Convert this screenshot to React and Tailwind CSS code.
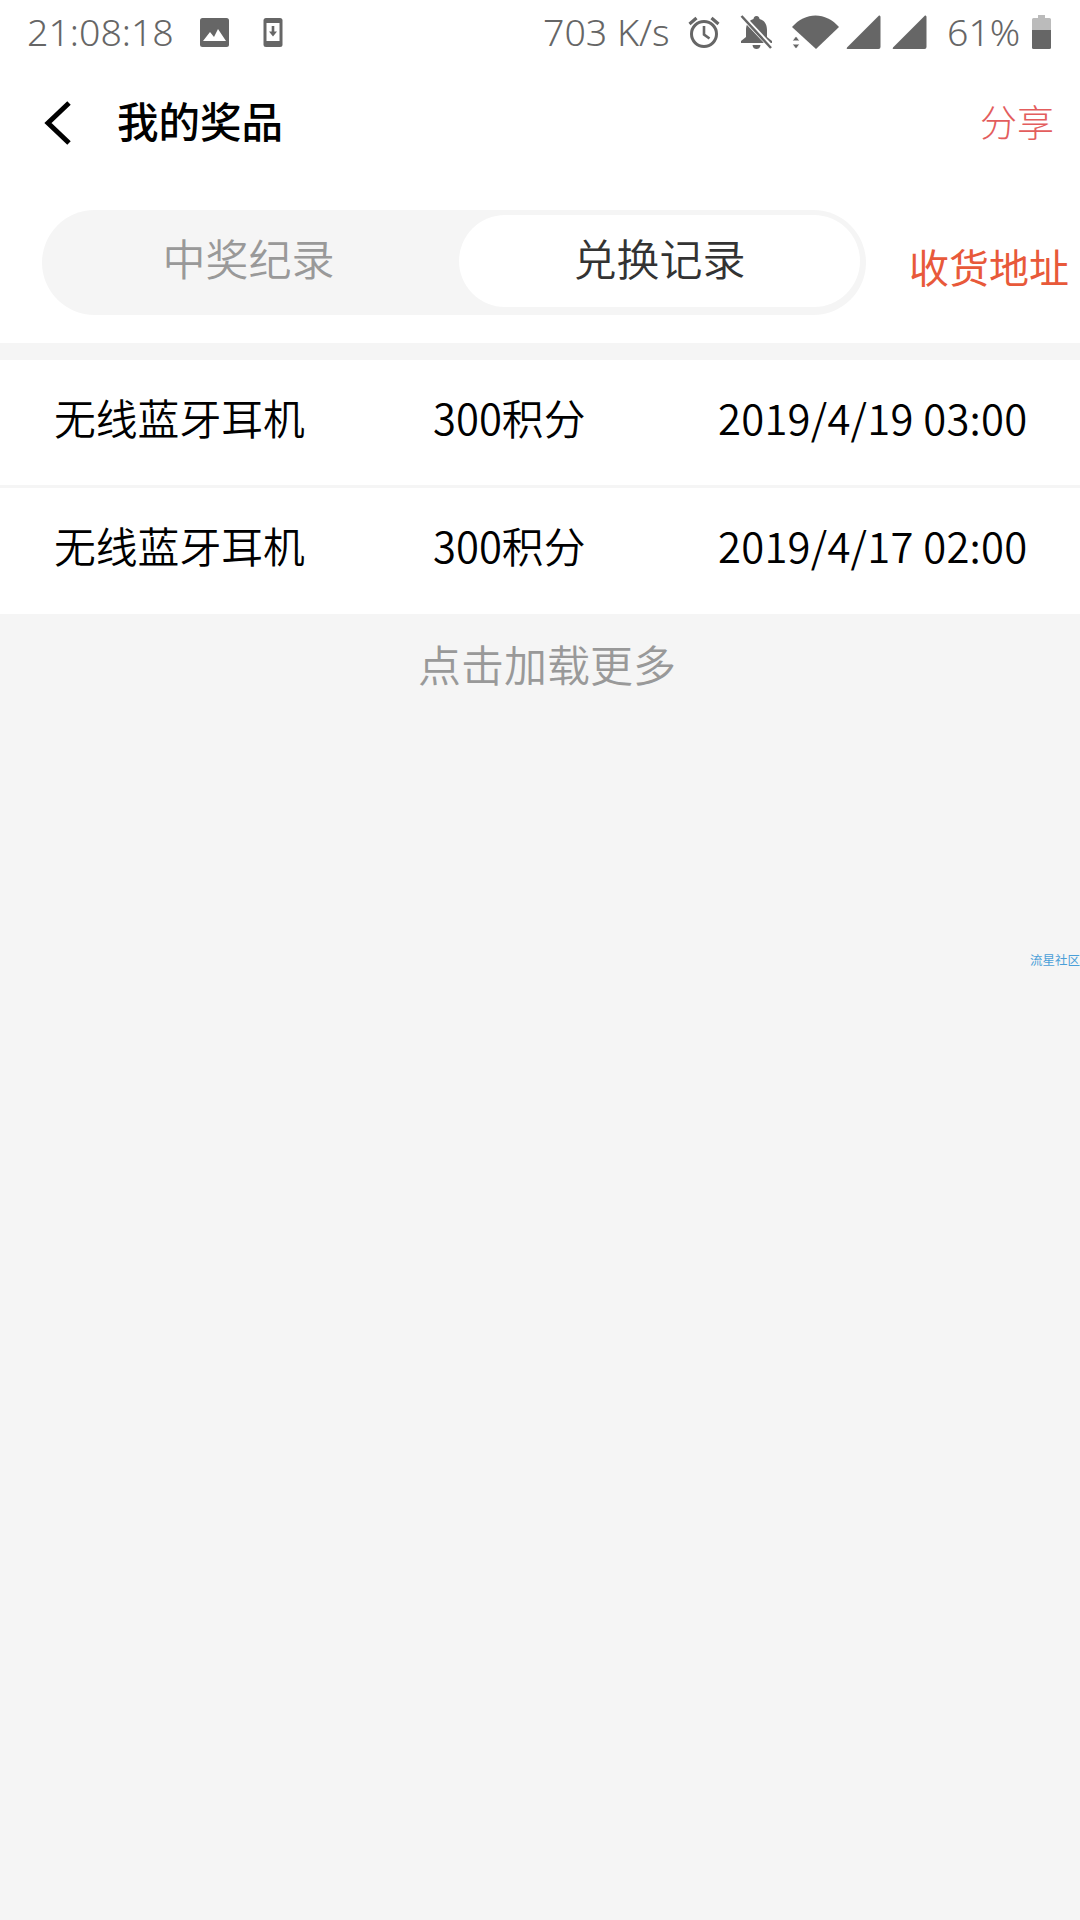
import React from 'react';

const records = [
  { name: '无线蓝牙耳机', points: '300积分', time: '2019/4/19 03:00' },
  { name: '无线蓝牙耳机', points: '300积分', time: '2019/4/17 02:00' },
];

const StatusBar = () => (
  <div className="flex h-[62px] items-center pt-[2px] text-[37.5px] font-light leading-none text-[#666] font-['Noto_Sans',sans-serif]">
    <span className="ml-[27px] w-[146px] whitespace-nowrap">21:08:18</span>
    <svg className="ml-[26px]" width="31" height="31" viewBox="0 0 31 31">
      <rect x="1" y="1" width="29" height="29" rx="2.5" fill="#666" />
      <path d="M4 24 L11 15 L15 20 L19 12 L27 24 Z" fill="#fff" />
    </svg>
    <svg className="ml-[33px]" width="20" height="31" viewBox="0 0 20 31">
      <rect x="0.5" y="1" width="19" height="29" rx="2.5" fill="#666" />
      <rect x="3.5" y="6" width="13" height="18" fill="#fff" />
      <path d="M8.7 9 H11.3 V14.5 H14 L10 19.5 L6 14.5 H8.7 Z" fill="#666" />
    </svg>
    <span className="ml-[260px] w-[125px] whitespace-nowrap">703 K/s</span>
    <svg className="ml-[19px]" width="34" height="34" viewBox="0 0 34 34" fill="none" stroke="#666" strokeWidth="3">
      <circle cx="17" cy="19" r="12.5" />
      <path d="M17 11 V19.5 L22.500 23.500" strokeWidth="2.6" />
      <path d="M2.500 9 L9.500 3 M31.500 9 L24.500 3" strokeWidth="3.2" />
    </svg>
    <svg className="ml-[18px]" width="35" height="34" viewBox="0 0 35 34">
      <path d="M17.5 1 C19.5 1 20.5 2.5 20.5 4 C26 5.5 28 10 28 15 V22 L33 26 V28 H2 V26 L7 22 V15 C7 10 9 5.5 14.500 4 C14.500 2.500 15.500 1 17.500 1 Z" fill="#666" />
      <path d="M13.500 30 H21.500 C21 33 19.500 34 17.500 34 C15.500 34 14 33 13.500 30 Z" fill="#666" />
      <path d="M3 1 L33 33" stroke="#fff" strokeWidth="5" />
      <path d="M2.500 1 L32 33" stroke="#666" strokeWidth="2.500" />
    </svg>
    <svg className="ml-[18px]" width="47" height="34" viewBox="0 0 47 34">
      <path d="M0 12 C13 -3.500 34 -3.500 47 12 L24 34 Z" fill="#666" />
      <path d="M4 21 L8 26 H0 Z M4 34 L0 29 H8 Z" fill="#666" stroke="#fff" strokeWidth="1" />
    </svg>
    <svg className="ml-[7px]" width="35" height="34" viewBox="0 0 35 34">
      <path d="M33 0.500 Q34.500 0 34.500 2 V32 Q34.500 34 32.500 34 H1.500 Q0 34 1 32.500 Z" fill="#666" />
    </svg>
    <svg className="ml-[11px]" width="35" height="34" viewBox="0 0 35 34">
      <path d="M33 0.500 Q34.500 0 34.500 2 V32 Q34.500 34 32.500 34 H1.500 Q0 34 1 32.500 Z" fill="#666" />
    </svg>
    <span className="ml-[20px] w-[70px] whitespace-nowrap">61%</span>
    <svg className="ml-[15px]" width="19" height="34" viewBox="0 0 19 34">
      <path d="M6 0 H13 V3 H17.500 Q19 3 19 4.500 V15 H0 V4.500 Q0 3 1.500 3 H6 Z" fill="#bbb" />
      <path d="M0 15 H19 V32.500 Q19 34 17.500 34 H1.500 Q0 34 0 32.500 Z" fill="#666" />
    </svg>
  </div>
);

const App = () => {
  return (
    <div className="min-h-[1920px] w-[1080px] overflow-hidden bg-[#f5f5f5] font-['Noto_Sans_CJK_SC','Noto_Sans',sans-serif]">
      <div className="bg-white">
        <StatusBar />

        {/* header */}
        <div className="flex h-[122px] items-center">
          <svg className="ml-[44px]" width="28" height="44" viewBox="0 0 28 44" fill="none" stroke="#000" strokeWidth="5">
            <path d="M25 2 L4 22 L25 42" />
          </svg>
          <h1 className="ml-[45px] pb-[5px] text-[41.5px] font-medium leading-none text-black">我的奖品</h1>
          <span className="ml-auto mr-[26px] pb-[4px] text-[37px] font-light leading-none text-[#e35d5d]">分享</span>
        </div>

        {/* tabs */}
        <div className="flex items-center pb-[28px] pt-[26px]">
          <div className="ml-[42px] flex h-[105px] w-[824px] rounded-full bg-[#f5f5f5] pb-[8px] pr-[6px] pt-[5px]">
            <div className="flex w-[413px] items-center justify-center pb-[7px] text-[43px] font-[350] leading-none text-[#999]">中奖纪录</div>
            <div className="ml-[4px] flex flex-1 items-center justify-center rounded-full bg-white pb-[7px] text-[43px] font-[350] leading-none text-[#333]">兑换记录</div>
          </div>
          <span className="ml-[43px] mt-[6px] whitespace-nowrap text-[40px] leading-none text-[#e8593a]">收货地址</span>
        </div>
      </div>

      {/* records */}
      <div className="mt-[17px] bg-white">
        {records.map((r, i) => (
          <div
            key={r.time}
            className={`grid grid-cols-[379px_285px_1fr] items-center pb-[10px] pl-[54px] text-[41.8px] font-[350] leading-none text-black ${i > 0 ? 'h-[129px] border-t-[3px] border-[#f5f5f5]' : 'h-[125px]'}`}
          >
            <span>{r.name}</span>
            <span>{r.points}</span>
            <span className="whitespace-nowrap tracking-[0.25px]">{r.time}</span>
          </div>
        ))}
      </div>

      <div className="pl-[14px] pt-[28px] text-center text-[43px] font-[350] leading-[43px] text-[#999]">点击加载更多</div>

      <div className="mt-[269px] text-right text-[12.5px] leading-none text-[#4a9fd8]">流星社区</div>
    </div>
  );
};

export default App;
